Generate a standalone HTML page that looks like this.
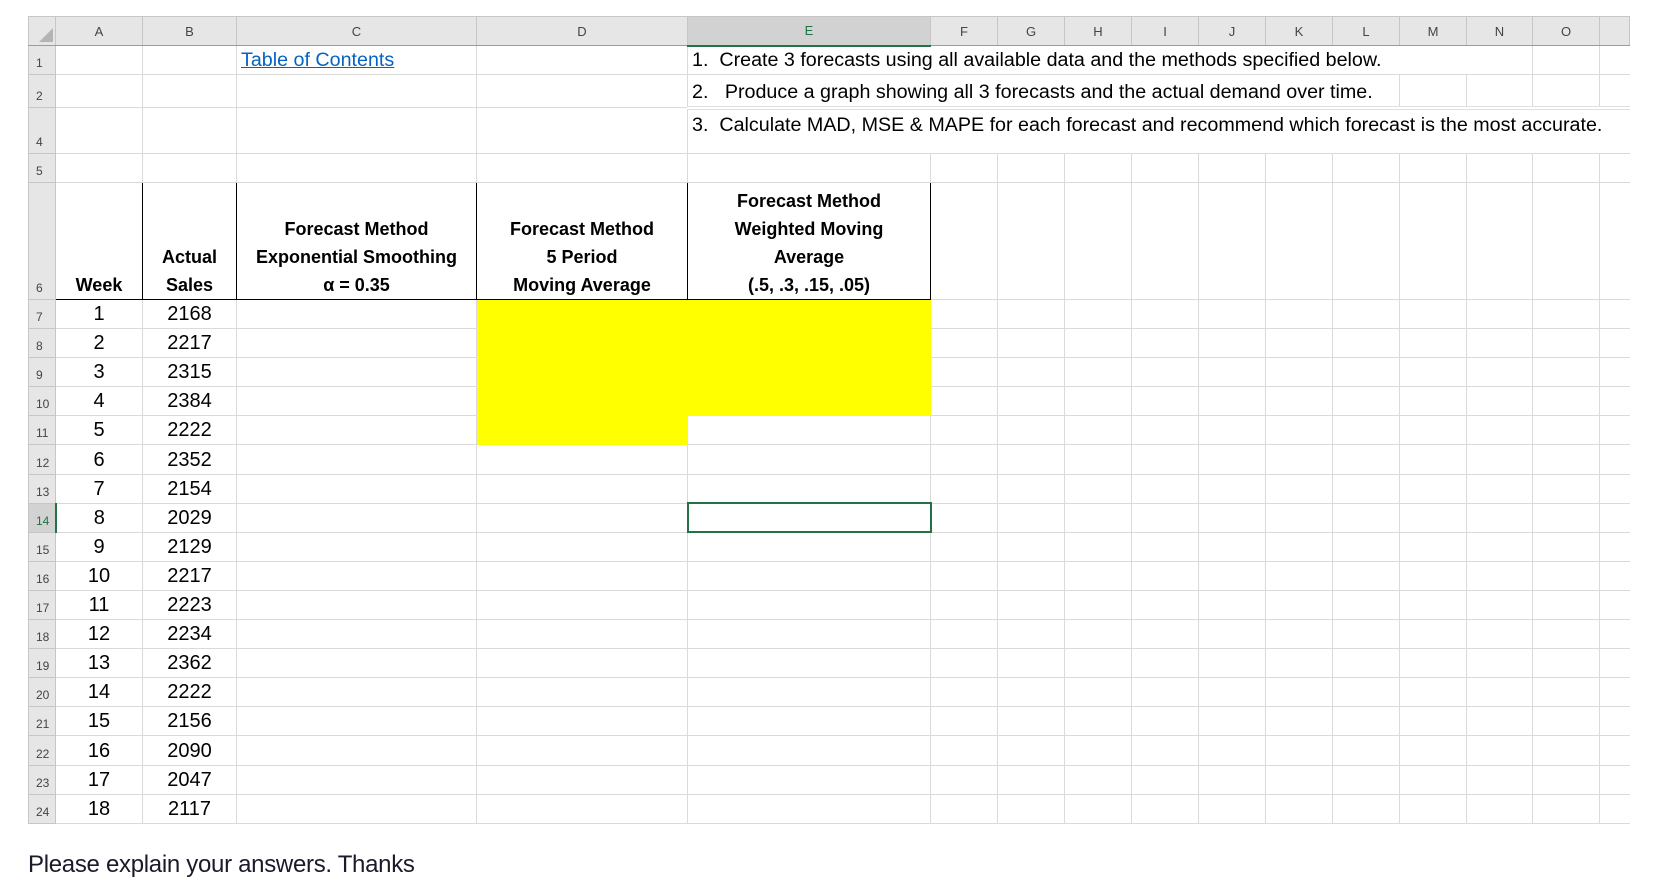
<!DOCTYPE html>
<html><head><meta charset="utf-8"><style>
body{margin:0;background:#fff;width:1662px;height:883px;overflow:hidden;position:relative;font-family:"Liberation Sans",Arial,sans-serif}
table{position:absolute;left:28px;top:16px;border-collapse:collapse;table-layout:fixed}
td{border:1px solid #dadada;padding:0;font-size:20px;color:#000;white-space:nowrap;overflow:visible;text-align:center;vertical-align:bottom;line-height:27px}
td.h{background:#e6e6e6;color:#444;font-size:13px;border-color:#c6c6c6}
tr.ch td{background:#e6e6e6;color:#444;font-size:13px;vertical-align:middle;border-color:#c6c6c6;border-bottom:1px solid #9c9c9c}
td.rn{text-align:left;padding-left:7px;font-size:12px;vertical-align:bottom;line-height:22px}
.y{background:#ffff00;border-color:#ffff00 !important}
.hd td.b{border:1px solid #000;font-weight:bold;font-size:18px;line-height:28px;vertical-align:bottom}
.l{text-align:left;padding-left:4px;font-size:19.7px !important}
a{color:#0563c1;text-decoration:underline}
tr.r{height:29.1px}
</style></head><body>
<table>
<colgroup><col style="width:27px"><col style="width:87px"><col style="width:94px"><col style="width:240px"><col style="width:211px"><col style="width:243px"><col style="width:67px"><col style="width:67px"><col style="width:67px"><col style="width:67px"><col style="width:67px"><col style="width:67px"><col style="width:67px"><col style="width:67px"><col style="width:66px"><col style="width:67px"><col style="width:30px"></colgroup>
<tr class="ch" style="height:29px"><td style="background:#e6e6e6"><svg width="14" height="14" style="display:block;margin:8px 0 0 10px"><polygon points="14,0 14,14 0,14" fill="#b4b4b4"/></svg></td><td>A</td><td>B</td><td>C</td><td>D</td><td style="background:#d2d2d2;border-bottom:2px solid #217346;color:#217346">E</td><td>F</td><td>G</td><td>H</td><td>I</td><td>J</td><td>K</td><td>L</td><td>M</td><td>N</td><td>O</td><td></td></tr>
<tr style="height:29px"><td class="h rn">1</td><td></td><td></td><td class="l"><a>Table of Contents</a></td><td></td><td class="l" colspan="10" style="border-right:1px solid #dadada">1.&nbsp; Create 3 forecasts using all available data and the methods specified below.</td><td></td><td style="border-right:none"></td></tr>
<tr style="height:33px"><td class="h rn">2</td><td></td><td></td><td></td><td></td><td class="l" colspan="8" style="border-bottom:4px double #e0e0e0">2.&nbsp;&nbsp; Produce a graph showing all 3 forecasts and the actual demand over time.</td><td style="border-bottom:4px double #e0e0e0"></td><td style="border-bottom:4px double #e0e0e0"></td><td style="border-bottom:4px double #e0e0e0"></td><td style="border-right:none;border-bottom:4px double #e0e0e0"></td></tr>
<tr style="height:46px"><td class="h rn">4</td><td></td><td></td><td></td><td></td><td class="l" colspan="12" style="vertical-align:top;line-height:24px;padding-top:3px;border-right:none">3.&nbsp; Calculate MAD, MSE &amp; MAPE for each forecast and recommend which forecast is the most accurate.</td></tr>
<tr style="height:29px"><td class="h rn">5</td><td></td><td></td><td></td><td></td><td></td><td></td><td></td><td></td><td></td><td></td><td></td><td></td><td></td><td></td><td></td><td style="border-right:none"></td></tr>
<tr class="hd" style="height:117px"><td class="h rn">6</td><td class="b">Week</td><td class="b">Actual<br>Sales</td><td class="b">Forecast Method<br>Exponential Smoothing<br>α = 0.35</td><td class="b">Forecast Method<br>5 Period<br>Moving Average</td><td class="b">Forecast Method<br>Weighted Moving<br>Average<br>(.5, .3, .15, .05)</td><td></td><td></td><td></td><td></td><td></td><td></td><td></td><td></td><td></td><td></td><td style="border-right:none"></td></tr>
<tr class="r"><td class="h rn">7</td><td>1</td><td>2168</td><td></td><td class="y" style="border-top:1px solid #000"></td><td class="y" style="border-top:1px solid #000"></td><td></td><td></td><td></td><td></td><td></td><td></td><td></td><td></td><td></td><td></td><td style="border-right:none"></td></tr>
<tr class="r"><td class="h rn">8</td><td>2</td><td>2217</td><td></td><td class="y"></td><td class="y"></td><td></td><td></td><td></td><td></td><td></td><td></td><td></td><td></td><td></td><td></td><td style="border-right:none"></td></tr>
<tr class="r"><td class="h rn">9</td><td>3</td><td>2315</td><td></td><td class="y"></td><td class="y"></td><td></td><td></td><td></td><td></td><td></td><td></td><td></td><td></td><td></td><td></td><td style="border-right:none"></td></tr>
<tr class="r"><td class="h rn">10</td><td>4</td><td>2384</td><td></td><td class="y"></td><td class="y"></td><td></td><td></td><td></td><td></td><td></td><td></td><td></td><td></td><td></td><td></td><td style="border-right:none"></td></tr>
<tr class="r"><td class="h rn">11</td><td>5</td><td>2222</td><td></td><td class="y"></td><td></td><td></td><td></td><td></td><td></td><td></td><td></td><td></td><td></td><td></td><td></td><td style="border-right:none"></td></tr>
<tr class="r"><td class="h rn">12</td><td>6</td><td>2352</td><td></td><td></td><td></td><td></td><td></td><td></td><td></td><td></td><td></td><td></td><td></td><td></td><td></td><td style="border-right:none"></td></tr>
<tr class="r"><td class="h rn">13</td><td>7</td><td>2154</td><td></td><td></td><td></td><td></td><td></td><td></td><td></td><td></td><td></td><td></td><td></td><td></td><td></td><td style="border-right:none"></td></tr>
<tr class="r"><td class="h rn" style="background:#d2d2d2;border-right:2px solid #217346;color:#217346">14</td><td>8</td><td>2029</td><td></td><td></td><td style="border:2px solid #217346"></td><td></td><td></td><td></td><td></td><td></td><td></td><td></td><td></td><td></td><td></td><td style="border-right:none"></td></tr>
<tr class="r"><td class="h rn">15</td><td>9</td><td>2129</td><td></td><td></td><td></td><td></td><td></td><td></td><td></td><td></td><td></td><td></td><td></td><td></td><td></td><td style="border-right:none"></td></tr>
<tr class="r"><td class="h rn">16</td><td>10</td><td>2217</td><td></td><td></td><td></td><td></td><td></td><td></td><td></td><td></td><td></td><td></td><td></td><td></td><td></td><td style="border-right:none"></td></tr>
<tr class="r"><td class="h rn">17</td><td>11</td><td>2223</td><td></td><td></td><td></td><td></td><td></td><td></td><td></td><td></td><td></td><td></td><td></td><td></td><td></td><td style="border-right:none"></td></tr>
<tr class="r"><td class="h rn">18</td><td>12</td><td>2234</td><td></td><td></td><td></td><td></td><td></td><td></td><td></td><td></td><td></td><td></td><td></td><td></td><td></td><td style="border-right:none"></td></tr>
<tr class="r"><td class="h rn">19</td><td>13</td><td>2362</td><td></td><td></td><td></td><td></td><td></td><td></td><td></td><td></td><td></td><td></td><td></td><td></td><td></td><td style="border-right:none"></td></tr>
<tr class="r"><td class="h rn">20</td><td>14</td><td>2222</td><td></td><td></td><td></td><td></td><td></td><td></td><td></td><td></td><td></td><td></td><td></td><td></td><td></td><td style="border-right:none"></td></tr>
<tr class="r"><td class="h rn">21</td><td>15</td><td>2156</td><td></td><td></td><td></td><td></td><td></td><td></td><td></td><td></td><td></td><td></td><td></td><td></td><td></td><td style="border-right:none"></td></tr>
<tr class="r"><td class="h rn">22</td><td>16</td><td>2090</td><td></td><td></td><td></td><td></td><td></td><td></td><td></td><td></td><td></td><td></td><td></td><td></td><td></td><td style="border-right:none"></td></tr>
<tr class="r"><td class="h rn">23</td><td>17</td><td>2047</td><td></td><td></td><td></td><td></td><td></td><td></td><td></td><td></td><td></td><td></td><td></td><td></td><td></td><td style="border-right:none"></td></tr>
<tr class="r"><td class="h rn">24</td><td>18</td><td>2117</td><td></td><td></td><td></td><td></td><td></td><td></td><td></td><td></td><td></td><td></td><td></td><td></td><td></td><td style="border-right:none"></td></tr>
</table>
<div style="position:absolute;left:28px;top:851px;font-size:24px;color:#1a1a2a;letter-spacing:-0.3px">Please explain your answers. Thanks</div>
</body></html>
